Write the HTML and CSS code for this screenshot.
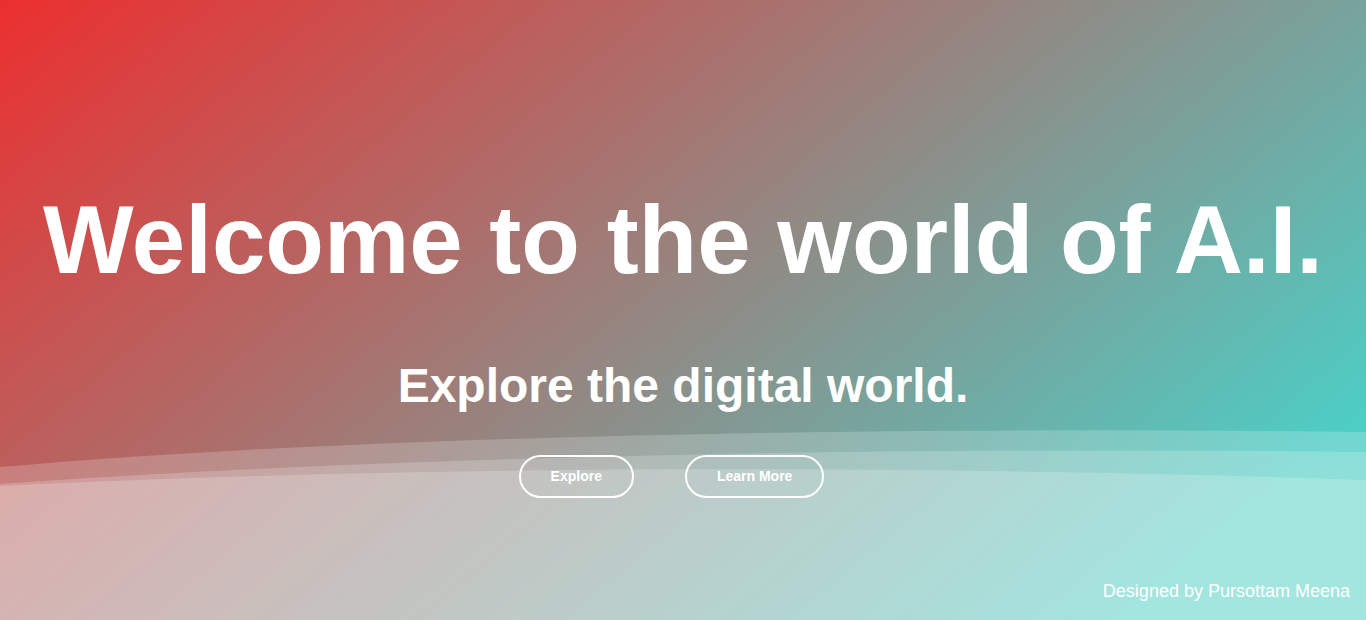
FILE: index.html
```html
<!DOCTYPE html>
<html lang="en">
<head>
<meta charset="utf-8">
<title>Welcome to the world of A.I.</title>
<link rel="stylesheet" href="styles.css">
</head>
<body>
<div class="hero">
  <svg class="waves" viewBox="0 0 1366 620" preserveAspectRatio="none" aria-hidden="true">
    <path class="wave" d="M0,467 C300,440 800,425 1366,432 L1366,620 L0,620 Z"/>
    <path class="wave" d="M0,484 C300,462 800,445 1366,452 L1366,620 L0,620 Z"/>
    <path class="wave" d="M0,486 C400,466 900,464 1366,480 L1366,620 L0,620 Z"/>
  </svg>
  <main class="content">
    <h1 class="title">Welcome to the world of A.I.</h1>
    <h2 class="subtitle">Explore the digital world.</h2>
    <div class="actions">
      <a class="btn" href="#">Explore</a>
      <a class="btn" href="#">Learn More</a>
    </div>
  </main>
  <footer class="credit">Designed by Pursottam Meena</footer>
</div>
</body>
</html>
```
FILE: styles.css
```css
* { box-sizing: border-box; }
html, body { margin: 0; padding: 0; height: 100%; }
body {
  font-family: "Liberation Sans", Arial, sans-serif;
  color: #fff;
  overflow: hidden;
}
.hero {
  position: relative;
  height: 100vh;
  display: flex;
  flex-direction: column;
  background: linear-gradient(140deg, #ec2f2f 0%, #4ecdc4 88%);
}
.waves {
  position: absolute;
  inset: 0;
  width: 100%;
  height: 100%;
  z-index: 0;
}
.wave { fill: rgba(255, 255, 255, 0.2); }
.content {
  position: relative;
  z-index: 1;
  display: flex;
  flex-direction: column;
  align-items: center;
  padding-top: 185px;
}
.title {
  margin: 0;
  font-size: 96px;
  line-height: 110px;
  font-weight: 700;
  text-align: center;
}
.subtitle {
  margin: 63px 0 0;
  font-size: 48px;
  line-height: 56px;
  font-weight: 700;
  text-align: center;
}
.actions {
  margin-top: 41px;
  display: flex;
  justify-content: center;
  gap: 51px;
  padding-right: 23px;
}
.btn {
  display: block;
  height: 43px;
  padding: 0 30px;
  border: 2px solid #fff;
  border-radius: 22px;
  color: #fff;
  text-decoration: none;
  font-size: 14px;
  font-weight: 700;
  line-height: 39px;
}
.credit {
  position: relative;
  z-index: 1;
  margin-top: auto;
  align-self: flex-end;
  padding: 0 16px 18px 0;
  font-size: 18px;
  line-height: 21px;
}
```
